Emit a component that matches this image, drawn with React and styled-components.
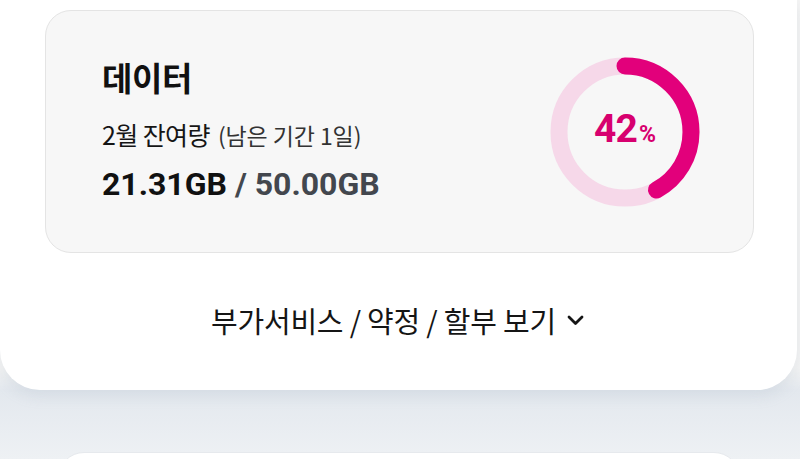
import React from "react";
import styled, { createGlobalStyle } from "styled-components";

const GlobalStyle = createGlobalStyle`
  body {
    margin: 0;
    background: #edf0f3;
    font-family: "Noto Sans CJK KR", "Noto Sans", sans-serif;
    color: #111;
  }
`;

const Page = styled.div`
  width: 800px;
  height: 459px;
  overflow: hidden;
  background: linear-gradient(180deg, #f4f4f4 0%, #f4f4f4 80%, #e3e8ee 85%, #eef1f4 100%);
`;

const OuterCard = styled.section`
  margin-right: 3px;
  padding: 10px 43px 0 45px;
  background: #fff;
  border-radius: 0 0 40px 40px;
  box-shadow: 0 6px 14px rgba(150, 165, 185, 0.18);
`;

const DataCard = styled.div`
  box-sizing: border-box;
  height: 243px;
  display: flex;
  align-items: center;
  justify-content: space-between;
  padding: 0 53px 0 56px;
  background: #f7f7f7;
  border: 1px solid #e4e4e4;
  border-radius: 26px;
`;

const Info = styled.div`
  display: flex;
  flex-direction: column;
  margin-top: -5px;
`;

const Title = styled.h2`
  margin: 0;
  font-size: 33px;
  font-weight: 700;
  line-height: 40px;
  letter-spacing: -0.3px;
  color: #111;
`;

const Remain = styled.p`
  margin: 21px 0 0;
  font-size: 25px;
  line-height: 32px;
  letter-spacing: -0.6px;
  color: #151515;
`;

const Period = styled.span`
  margin-left: 3px;
  font-size: 23px;
  color: #333;
  letter-spacing: -0.1px;
`;

const Amount = styled.p`
  margin: 15px 0 0;
  font-family: Roboto, "Noto Sans", sans-serif;
  font-size: 32px;
  font-weight: 700;
  line-height: 36px;
  letter-spacing: 0;
  color: #111;
`;

const Total = styled.span`
  color: #43474e;
`;

const Donut = styled.div`
  position: relative;
  width: 150px;
  height: 150px;
  flex: none;
`;

const DonutLabel = styled.div`
  position: absolute;
  inset: 0;
  display: flex;
  align-items: baseline;
  justify-content: center;
  padding-top: 53px;
  box-sizing: border-box;
  font-family: Roboto, "Noto Sans", sans-serif;
  font-weight: 700;
  line-height: 1;
  color: #d7006f;
`;

const Big = styled.span`
  font-size: 39px;
  letter-spacing: -1px;
`;

const Small = styled.span`
  font-size: 23px;
  margin-left: 2px;
`;

const MoreRow = styled.button`
  width: 100%;
  height: 137px;
  display: flex;
  align-items: center;
  justify-content: center;
  gap: 11px;
  padding: 0 4px 4px 0;
  border: 0;
  background: transparent;
  font-family: "Noto Sans CJK KR", "Noto Sans", sans-serif;
  font-size: 29px;
  letter-spacing: -0.2px;
  color: #151515;
`;

const NextCard = styled.div`
  margin: 62px 60px 0 58px;
  height: 40px;
  background: #fff;
  border-radius: 26px 26px 0 0;
  border: 1px solid #e6e9ed;
`;

const Ring = ({ percent }) => {
  const r = 66;
  const c = 2 * Math.PI * r;
  return (
    <svg width="150" height="150" viewBox="0 0 150 150">
      <circle cx="75" cy="75" r={r} fill="none" stroke="#f6d8e9" strokeWidth="17" />
      <circle
        cx="75"
        cy="75"
        r={r}
        fill="none"
        stroke="#e2007b"
        strokeWidth="17"
        strokeLinecap="round"
        strokeDasharray={`${(c * percent) / 100} ${c}`}
        transform="rotate(-90 75 75)"
      />
    </svg>
  );
};

const Chevron = () => (
  <svg width="17" height="12" viewBox="0 0 17 12">
    <polyline points="2,3 8.5,9.5 15,3" fill="none" stroke="#151515" strokeWidth="2.8" strokeLinecap="round" strokeLinejoin="round" />
  </svg>
);

const App = () => {
  return (
    <Page>
      <GlobalStyle />
      <OuterCard>
        <DataCard>
          <Info>
            <Title>데이터</Title>
            <Remain>
              2월 잔여량 <Period>(남은 기간 1일)</Period>
            </Remain>
            <Amount>
              21.31GB <Total>/ 50.00GB</Total>
            </Amount>
          </Info>
          <Donut>
            <Ring percent={42} />
            <DonutLabel>
              <Big>42</Big>
              <Small>%</Small>
            </DonutLabel>
          </Donut>
        </DataCard>
        <MoreRow>
          부가서비스 / 약정 / 할부 보기
          <Chevron />
        </MoreRow>
      </OuterCard>
      <NextCard />
    </Page>
  );
};

export default App;
